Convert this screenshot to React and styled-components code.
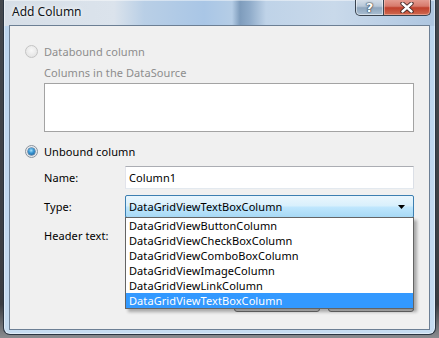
import React from "react";
import styled, { createGlobalStyle } from "styled-components";

const GlobalStyle = createGlobalStyle`
  html, body { margin: 0; padding: 0; }
  body {
    width: 439px; height: 338px; overflow: hidden;
    background: #2f3236;
    font-family: "Noto Sans", "Open Sans", sans-serif;
  }
`;

const Screen = styled.div`
  width: 439px;
  height: 338px;
  box-sizing: border-box;
  padding-left: 3px;
  background: linear-gradient(180deg, #44484e 0%, #3a3d42 90%, #8a8c90 100%);
`;

const Frame = styled.div`
  width: 433px;
  height: 335px;
  box-sizing: border-box;
  border: 1px solid #2a3542;
  border-top: none;
  border-radius: 0 0 7px 7px;
  padding: 0 5px 4px 5px;
  display: flex;
  flex-direction: column;
  background:
    linear-gradient(180deg, rgba(255,255,255,0) 0px, rgba(255,255,255,0) 26px, #bcd5ee 26px, #c6dcf1 100%),
    linear-gradient(90deg, #d6dee7 0px, #dbe3ec 110px, #b9cfe6 140px, #a9c6e6 200px, #b5cde6 228px, #7e9cbc 236px, #90acca 246px, #bfd3e8 262px, #c9d9ea 330px, #bcd0e6 380px, #aec6e0 430px);
  box-shadow: inset 0 0 0 1px rgba(255,255,255,0.45);
`;

const TitleBar = styled.div`
  height: 25px;
  flex: none;
  display: flex;
  align-items: flex-start;
`;

const Title = styled.div`
  margin: 4px 0 0 3px;
  font-size: 12px;
  line-height: 16px;
  color: #101418;
  text-shadow: 0 0 6px rgba(255,255,255,0.9), 0 0 3px rgba(255,255,255,0.9);
`;

const Caption = styled.div`
  margin-left: auto;
  margin-right: -1px;
  display: flex;
  height: 17px;
  margin-top: -1px;
`;

const CapButton = styled.div`
  height: 17px;
  box-sizing: border-box;
  width: ${(p) => p.$w}px;
  border: 1px solid #39434f;
  border-top: none;
  display: flex;
  align-items: center;
  justify-content: center;
  ${(p) =>
    p.$close
      ? `
    border-radius: 0 0 5px 0;
    border-left: none;
    background: linear-gradient(180deg, #e6a196 0%, #d77a6c 45%, #c0402c 55%, #cf6a50 100%);
    box-shadow: inset 0 0 0 1px rgba(255,220,210,0.45);
  `
      : `
    border-radius: 0 0 0 5px;
    background: linear-gradient(180deg, #d8e1ea 0%, #b8c8d8 45%, #8fa6bd 55%, #a9bed2 100%);
    box-shadow: inset 0 0 0 1px rgba(255,255,255,0.5);
  `}
`;

const QMark = styled.span`
  font-family: "DejaVu Sans", sans-serif;
  font-weight: 700;
  font-size: 13px;
  line-height: 13px;
  color: #fff;
  text-shadow: 0 0 1px #33404d, 0 0 1px #33404d, 0 0 2px #33404d;
`;

const Client = styled.div`
  flex: 1;
  border: 1px solid #6c7f94;
  background: #f0f0f0;
  display: flex;
  flex-direction: column;
  font-size: 11px;
  letter-spacing: 0.08px;
  color: #000;
`;

const RadioRow = styled.div`
  display: flex;
  align-items: center;
  height: 16px;
  margin-top: ${(p) => p.$mt}px;
  padding-left: 15px;
  gap: 6px;
  color: ${(p) => (p.$disabled ? "#8d8d8d" : "#000")};
`;

const RadioCircle = styled.span`
  width: 13px;
  height: 13px;
  box-sizing: border-box;
  border-radius: 50%;
  flex: none;
  display: flex;
  align-items: center;
  justify-content: center;
  ${(p) =>
    p.$disabled
      ? `border: 1px solid #c4c4c4; background: radial-gradient(circle at 50% 40%, #f8f8f8 0%, #e6e6e6 70%, #dcdcdc 100%);`
      : `border: 1px solid #8a939d; background: radial-gradient(circle at 50% 40%, #f6f7f8 0%, #dde1e5 100%);`}
`;

const RadioDot = styled.span`
  width: 7px;
  height: 7px;
  border-radius: 50%;
  background: radial-gradient(circle at 45% 35%, #a8e2fb 0%, #3d9ad6 40%, #0d4f8c 100%);
  box-shadow: 0 0 0 0.5px #1c4d7c;
`;

const SubLabel = styled.div`
  margin: 6px 0 0 34px;
  height: 16px;
  line-height: 16px;
  color: #8d8d8d;
`;

const ListBox = styled.div`
  margin: 2px 15px 0 34px;
  height: 49px;
  box-sizing: border-box;
  border: 1px solid #a3a3a3;
  background: #fff;
`;

const FieldRow = styled.div`
  display: grid;
  grid-template-columns: 81px 289px;
  align-items: center;
  margin: ${(p) => p.$mt}px 0 0 34px;
  height: 23px;
`;

const FieldLabel = styled.span`
  line-height: 16px;
`;

const TextBox = styled.div`
  height: 23px;
  box-sizing: border-box;
  border: 1px solid #dbdfe6;
  border-top-color: #abadb3;
  border-left-color: #e2e3ea;
  border-bottom-color: #e3e9ef;
  background: #fff;
  padding-left: 3px;
  display: flex;
  align-items: center;
`;

const ComboWrap = styled.div`
  position: relative;
  height: 23px;
`;

const Combo = styled.div`
  height: 23px;
  box-sizing: border-box;
  border: 1px solid #3c7fb1;
  border-radius: 2px;
  background: linear-gradient(180deg, #eaf6fd 0%, #d9f0fc 45%, #bee6fd 55%, #a7d9f5 100%);
  padding: 0 8px 0 3px;
  display: flex;
  align-items: center;
  justify-content: space-between;
`;

const DropList = styled.div`
  position: absolute;
  top: 22px;
  left: 0;
  width: 289px;
  box-sizing: border-box;
  border: 1px solid #646464;
  background: #fff;
  box-shadow: 3px 3px 3px rgba(0,0,0,0.3);
  z-index: 2;
`;

const DropItem = styled.div`
  height: 15px;
  line-height: 15px;
  padding-left: 3px;
  white-space: nowrap;
  background: ${(p) => (p.$sel ? "#3399ff" : "transparent")};
  color: ${(p) => (p.$sel ? "#fff" : "#000")};
`;

const ButtonRow = styled.div`
  display: flex;
  justify-content: flex-end;
  gap: 8px;
  margin: 42px 15px 0 0;
`;

const Button = styled.div`
  width: 86px;
  height: 23px;
  box-sizing: border-box;
  border: 1px solid #707070;
  border-radius: 3px;
  background: linear-gradient(180deg, #f2f2f2 0%, #ebebeb 50%, #dddddd 50%, #cfcfcf 100%);
`;

const items = [
  "DataGridViewButtonColumn",
  "DataGridViewCheckBoxColumn",
  "DataGridViewComboBoxColumn",
  "DataGridViewImageColumn",
  "DataGridViewLinkColumn",
  "DataGridViewTextBoxColumn",
];

export default function App() {
  return (
    <>
      <GlobalStyle />
      <Screen>
        <Frame>
          <TitleBar>
            <Title>Add Column</Title>
            <Caption>
              <CapButton $w={29}>
                <QMark>?</QMark>
              </CapButton>
              <CapButton $w={47} $close>
                <svg width="14" height="11" viewBox="0 0 14 11">
                  <path
                    d="M2.5 1.5 L11.5 9.5 M11.5 1.5 L2.5 9.5"
                    stroke="#3a2220"
                    strokeWidth="4.2"
                    strokeLinecap="round"
                  />
                  <path
                    d="M2.5 1.5 L11.5 9.5 M11.5 1.5 L2.5 9.5"
                    stroke="#ffffff"
                    strokeWidth="2.4"
                    strokeLinecap="round"
                  />
                </svg>
              </CapButton>
            </Caption>
          </TitleBar>
          <Client>
            <RadioRow $mt={17} $disabled>
              <RadioCircle $disabled />
              <span>Databound column</span>
            </RadioRow>
            <SubLabel>Columns in the DataSource</SubLabel>
            <ListBox />
            <RadioRow $mt={11}>
              <RadioCircle>
                <RadioDot />
              </RadioCircle>
              <span>Unbound column</span>
            </RadioRow>
            <FieldRow $mt={7}>
              <FieldLabel>Name:</FieldLabel>
              <TextBox>Column1</TextBox>
            </FieldRow>
            <FieldRow $mt={6}>
              <FieldLabel>Type:</FieldLabel>
              <ComboWrap>
                <Combo>
                  <span>DataGridViewTextBoxColumn</span>
                  <svg width="7" height="4" viewBox="0 0 7 4">
                    <path d="M0 0 H7 L3.5 4 Z" fill="#000" />
                  </svg>
                </Combo>
                <DropList>
                  {items.map((it, i) => (
                    <DropItem key={it} $sel={i === items.length - 1}>
                      {it}
                    </DropItem>
                  ))}
                </DropList>
              </ComboWrap>
            </FieldRow>
            <FieldRow $mt={6}>
              <FieldLabel>Header text:</FieldLabel>
              <TextBox />
            </FieldRow>
            <ButtonRow>
              <Button />
              <Button />
            </ButtonRow>
          </Client>
        </Frame>
      </Screen>
    </>
  );
}
